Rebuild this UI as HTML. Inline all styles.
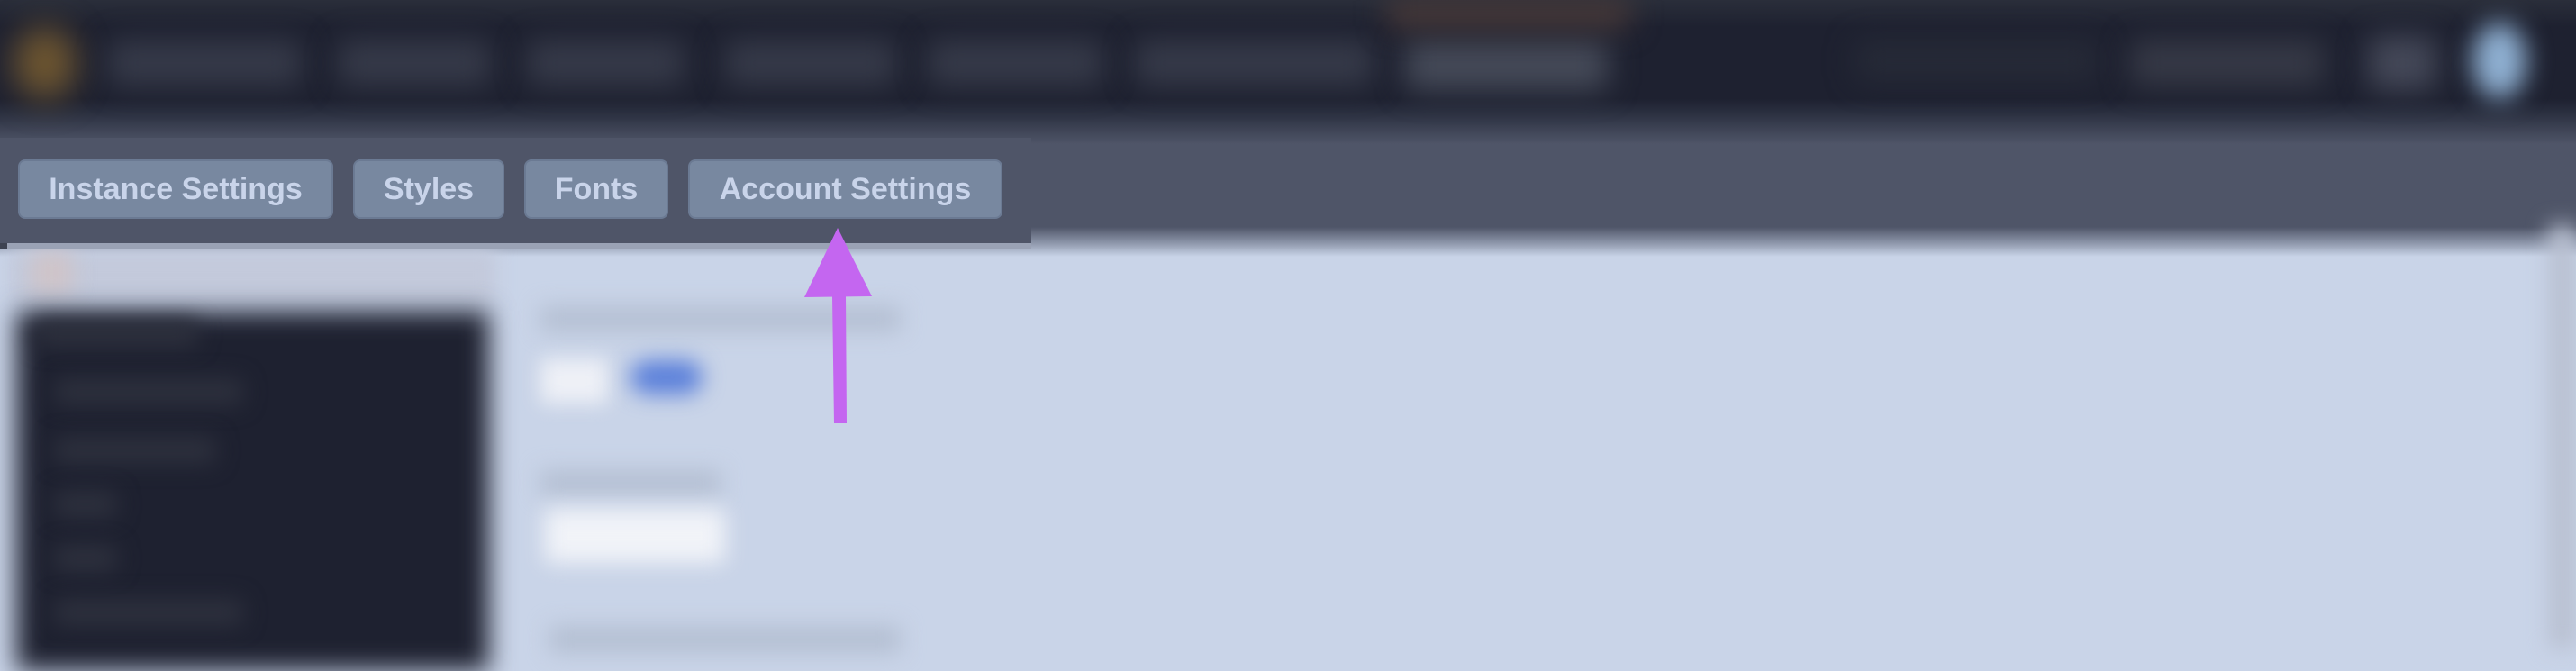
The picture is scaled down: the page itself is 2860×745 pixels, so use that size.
<!DOCTYPE html>
<html><head><meta charset="utf-8"><style>
*{margin:0;padding:0;box-sizing:border-box}
body{width:2860px;height:720px;overflow:hidden;background:#c9d4e8;position:relative;font-family:"Liberation Sans",sans-serif}
.abs{position:absolute}
.top{left:0;top:0;width:2860px;height:290px;background:linear-gradient(#2a2e3a 0,#1e2130 30px,#1e2130 110px,#2a2f3f 125px,#4f5568 160px,#4f5568 252px,#8e97ab 270px,#c9d4e8 285px)}
.blob{position:absolute;background:#363a49;border-radius:10px;filter:blur(16px)}
.sidehead{left:10px;top:278px;width:540px;height:55px;background:#c3c9db;filter:blur(10px)}
.side{left:18px;top:345px;width:525px;height:400px;background:#1e2130;filter:blur(14px)}
.sblob{position:absolute;background:#2d303d;height:30px;border-radius:8px;filter:blur(12px)}
.panel{left:0;top:153px;width:1145px;height:117px;background:#4f5568}
.strip{left:0;top:270px;width:1145px;height:7px;background:#9aa2b5}
.btn{position:absolute;top:177px;height:66px;background:#7888a0;border:2px solid #6b7a93;border-radius:8px;color:#c9d4ea;font-weight:bold;font-size:34px;line-height:62px;text-align:center;white-space:nowrap}
.rightedge{left:2830px;top:250px;width:30px;height:470px;background:#b8bfd0;filter:blur(12px)}
</style></head><body>
<div class="abs top"></div>
<div class="abs rightedge"></div>
<div class="abs" style="left:15px;top:30px;width:70px;height:80px;border-radius:50%;background:#6e5630;filter:blur(18px)"></div>
<div class="blob" style="left:120px;top:45px;width:215px;height:50px"></div>
<div class="blob" style="left:375px;top:45px;width:170px;height:50px"></div>
<div class="blob" style="left:585px;top:45px;width:175px;height:50px"></div>
<div class="blob" style="left:805px;top:45px;width:190px;height:50px"></div>
<div class="blob" style="left:1030px;top:45px;width:195px;height:50px"></div>
<div class="blob" style="left:1260px;top:45px;width:265px;height:50px"></div>
<div class="blob" style="left:1560px;top:45px;width:225px;height:55px;background:#454a58"></div>
<div class="abs" style="left:1540px;top:0;width:270px;height:30px;background:#4a3a38;filter:blur(16px)"></div>
<div class="blob" style="left:2060px;top:45px;width:270px;height:45px;background:#262a37"></div>
<div class="blob" style="left:2365px;top:45px;width:215px;height:50px;background:#363946"></div>
<div class="blob" style="left:2630px;top:40px;width:75px;height:60px;background:#444858"></div>
<div class="abs" style="left:2745px;top:25px;width:60px;height:85px;border-radius:50%;background:#8fb0d2;filter:blur(14px)"></div>
<div class="abs sidehead"></div>
<div class="abs" style="left:35px;top:280px;width:45px;height:45px;background:#cfc4c8;filter:blur(12px)"></div>
<div class="abs side"></div>
<div class="sblob" style="left:40px;top:355px;width:180px"></div>
<div class="sblob" style="left:60px;top:420px;width:210px"></div>
<div class="sblob" style="left:60px;top:485px;width:180px"></div>
<div class="sblob" style="left:60px;top:545px;width:70px"></div>
<div class="sblob" style="left:60px;top:605px;width:70px"></div>
<div class="sblob" style="left:60px;top:665px;width:210px"></div>
<div class="abs" style="left:600px;top:340px;width:400px;height:28px;background:#b4bfd2;filter:blur(12px)"></div>
<div class="abs" style="left:600px;top:398px;width:75px;height:50px;background:#eef0f6;filter:blur(11px)"></div>
<div class="abs" style="left:700px;top:400px;width:80px;height:38px;border-radius:20px;background:#5b80da;filter:blur(12px)"></div>
<div class="abs" style="left:600px;top:522px;width:200px;height:28px;background:#b4bfd2;filter:blur(12px)"></div>
<div class="abs" style="left:605px;top:565px;width:200px;height:60px;background:#f1f3f8;filter:blur(12px)"></div>
<div class="abs" style="left:610px;top:695px;width:390px;height:30px;background:#b4bfd2;filter:blur(12px)"></div>
<div class="abs panel"></div>
<div class="abs strip"></div>
<div class="abs" style="left:0;top:270px;width:8px;height:7px;background:#3e4352"></div>
<div class="btn" style="left:20px;width:350px">Instance Settings</div>
<div class="btn" style="left:392px;width:168px">Styles</div>
<div class="btn" style="left:582px;width:160px">Fonts</div>
<div class="btn" style="left:764px;width:349px">Account Settings</div>
<svg class="abs" style="left:0;top:0" width="2860" height="720">
<polygon points="930,253 893,330 968,329" fill="#c466f0"/>
<polygon points="924,329 939,329 940,470 926,470" fill="#c466f0"/>
</svg>
</body></html>
